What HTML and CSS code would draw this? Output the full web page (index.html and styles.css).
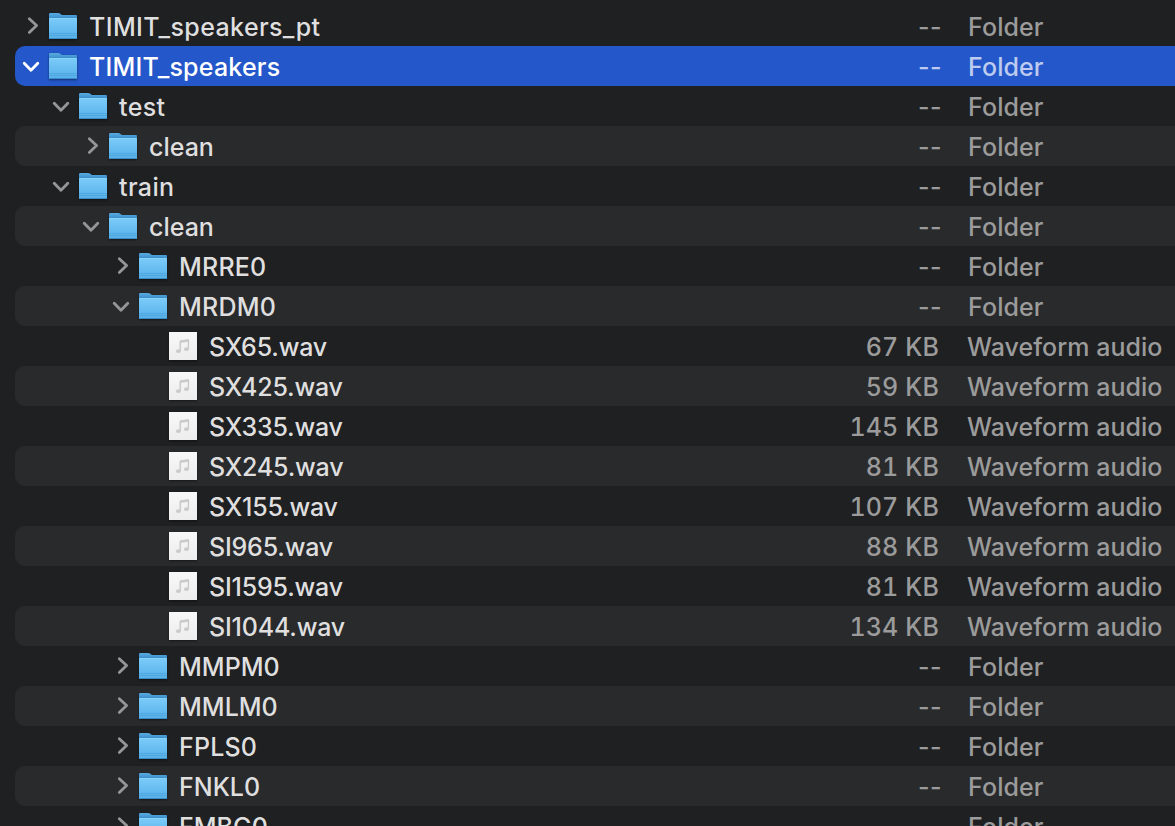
FILE: index.html
```html
<!DOCTYPE html>
<html lang="en">
<head>
<meta charset="utf-8">
<title>Files</title>
<link rel="stylesheet" href="styles.css">
</head>
<body>
<svg class="defs" aria-hidden="true">
  <defs>
    <linearGradient id="back" x1="0" y1="0" x2="0" y2="1"><stop offset="0" stop-color="#59acdf"/><stop offset=".22" stop-color="#398bcb"/><stop offset="1" stop-color="#398bcb"/></linearGradient>
    <linearGradient id="front" x1="0" y1="0" x2="0" y2="1"><stop offset="0" stop-color="#7acbf8"/><stop offset="1" stop-color="#57b0e9"/></linearGradient>
    <linearGradient id="paper" x1="0" y1="0" x2="0" y2="1"><stop offset="0" stop-color="#f8f8f8"/><stop offset="1" stop-color="#ededed"/></linearGradient>
    <symbol id="right" viewBox="0 0 34 40"><path class="stroke" d="M14.3 12.7 21.6 19.5 14.3 26.4"/></symbol>
    <symbol id="down" viewBox="0 0 34 40"><path class="stroke" d="M9.2 17.2 16 24.3 22.8 17.2"/></symbol>
    <symbol id="folder" viewBox="0 0 28 40">
      <path d="M0 8.2Q0 7 1.2 7H9.2Q10.4 7 11.2 7.7L12.6 8.7Q13.2 9 14.2 9H27Q28 9 28 10V32Q28 33 27 33H1Q0 33 0 32Z" fill="url(#back)"/>
      <path d="M0 13Q0 12 1 12H27Q28 12 28 13V32Q28 33 27 33H1Q0 33 0 32Z" fill="url(#front)"/>
      <path d="M.5 12.5H27.5" stroke="#91d6fa" stroke-width=".7"/>
      <path d="M0 27.5H28M0 29.5H28" stroke="#429bd5" stroke-width=".8" opacity=".7"/>
      <path d="M.5 32.5H27.5" stroke="#378bc6" stroke-width="1"/>
    </symbol>
    <symbol id="audio" viewBox="0 0 28 40">
      <path d="M0 6H28V34H0Z" fill="url(#paper)"/>
      <g fill="#cbcbcb"><path d="M11 14.2 20 13V15.8L11 17Z"/><ellipse cx="9.4" cy="25.2" rx="2.4" ry="1.9"/><ellipse cx="17.4" cy="23.2" rx="2.4" ry="1.9"/></g>
      <path d="M11.3 14.8V25M19.4 14V23" stroke="#cbcbcb" stroke-width="1.5"/>
    </symbol>
  </defs>
</svg>
<main class="list">
  <div class="row d0"><svg class="chevron"><use href="#right"/></svg><svg class="icon"><use href="#folder"/></svg><span class="name wide">TIMIT_speakers_pt</span><span class="size none">--</span><span class="kind">Folder</span></div>
  <div class="row d0 selected"><svg class="chevron"><use href="#down"/></svg><svg class="icon"><use href="#folder"/></svg><span class="name">TIMIT_speakers</span><span class="size none">--</span><span class="kind">Folder</span></div>
  <div class="row d1"><svg class="chevron"><use href="#down"/></svg><svg class="icon"><use href="#folder"/></svg><span class="name wide">test</span><span class="size none">--</span><span class="kind">Folder</span></div>
  <div class="row d2"><svg class="chevron"><use href="#right"/></svg><svg class="icon"><use href="#folder"/></svg><span class="name">clean</span><span class="size none">--</span><span class="kind">Folder</span></div>
  <div class="row d1"><svg class="chevron"><use href="#down"/></svg><svg class="icon"><use href="#folder"/></svg><span class="name wide">train</span><span class="size none">--</span><span class="kind">Folder</span></div>
  <div class="row d2"><svg class="chevron"><use href="#down"/></svg><svg class="icon"><use href="#folder"/></svg><span class="name">clean</span><span class="size none">--</span><span class="kind">Folder</span></div>
  <div class="row d3"><svg class="chevron"><use href="#right"/></svg><svg class="icon"><use href="#folder"/></svg><span class="name caps">MRRE0</span><span class="size none">--</span><span class="kind">Folder</span></div>
  <div class="row d3"><svg class="chevron"><use href="#down"/></svg><svg class="icon"><use href="#folder"/></svg><span class="name caps">MRDM0</span><span class="size none">--</span><span class="kind">Folder</span></div>
  <div class="row d4"><span class="chevron"></span><svg class="icon file"><use href="#audio"/></svg><span class="name wav">SX65.wav</span><span class="size">67 KB</span><span class="kind audio">Waveform audio</span></div>
  <div class="row d4"><span class="chevron"></span><svg class="icon file"><use href="#audio"/></svg><span class="name wav">SX425.wav</span><span class="size">59 KB</span><span class="kind audio">Waveform audio</span></div>
  <div class="row d4"><span class="chevron"></span><svg class="icon file"><use href="#audio"/></svg><span class="name wav">SX335.wav</span><span class="size">145 KB</span><span class="kind audio">Waveform audio</span></div>
  <div class="row d4"><span class="chevron"></span><svg class="icon file"><use href="#audio"/></svg><span class="name wav">SX245.wav</span><span class="size">81 KB</span><span class="kind audio">Waveform audio</span></div>
  <div class="row d4"><span class="chevron"></span><svg class="icon file"><use href="#audio"/></svg><span class="name wav">SX155.wav</span><span class="size">107 KB</span><span class="kind audio">Waveform audio</span></div>
  <div class="row d4"><span class="chevron"></span><svg class="icon file"><use href="#audio"/></svg><span class="name wav">SI965.wav</span><span class="size">88 KB</span><span class="kind audio">Waveform audio</span></div>
  <div class="row d4"><span class="chevron"></span><svg class="icon file"><use href="#audio"/></svg><span class="name wav">SI1595.wav</span><span class="size">81 KB</span><span class="kind audio">Waveform audio</span></div>
  <div class="row d4"><span class="chevron"></span><svg class="icon file"><use href="#audio"/></svg><span class="name wav">SI1044.wav</span><span class="size">134 KB</span><span class="kind audio">Waveform audio</span></div>
  <div class="row d3"><svg class="chevron"><use href="#right"/></svg><svg class="icon"><use href="#folder"/></svg><span class="name">MMPM0</span><span class="size none">--</span><span class="kind">Folder</span></div>
  <div class="row d3"><svg class="chevron"><use href="#right"/></svg><svg class="icon"><use href="#folder"/></svg><span class="name">MMLM0</span><span class="size none">--</span><span class="kind">Folder</span></div>
  <div class="row d3"><svg class="chevron"><use href="#right"/></svg><svg class="icon"><use href="#folder"/></svg><span class="name caps">FPLS0</span><span class="size none">--</span><span class="kind">Folder</span></div>
  <div class="row d3"><svg class="chevron"><use href="#right"/></svg><svg class="icon"><use href="#folder"/></svg><span class="name">FNKL0</span><span class="size none">--</span><span class="kind">Folder</span></div>
  <div class="row d3"><svg class="chevron"><use href="#right"/></svg><svg class="icon"><use href="#folder"/></svg><span class="name">FMBG0</span><span class="size none">--</span><span class="kind">Folder</span></div>
</main>
</body>
</html>
```
FILE: styles.css
```css
body { margin: 0; background: #1f2022; overflow: hidden; }
.defs { display: block; width: 0; height: 0; }
.list {
  box-sizing: border-box;
  height: 826px;
  padding: 6px 0 0 15px;
  overflow: hidden;
  font: 450 25px/40px Inter, "Liberation Sans", sans-serif;
  color: #9b9b9b;
}
.row {
  display: flex;
  box-sizing: border-box;
  height: 40px;
  border-radius: 10px 0 0 10px;
  white-space: pre;
}
.row:nth-child(even) { background: #292a2c; }
.row.selected { background: #2457c9; color: #bccbef; }
.d1 { padding-left: 30px; }
.d2 { padding-left: 60px; }
.d3 { padding-left: 90px; }
.d4 { padding-left: 120px; }
.chevron { flex: none; width: 34px; height: 40px; color: #969696; }
.selected .chevron { color: #fff; }
.stroke { fill: none; stroke: currentColor; stroke-width: 2.8; stroke-linecap: round; stroke-linejoin: round; }
.icon { flex: none; width: 28px; height: 40px; filter: drop-shadow(0 1px 1px rgb(0 0 0 / .45)); }
.name { flex: 1; padding: 1px 0 0 12px; color: #dfdfdf; }
.wide { letter-spacing: .38px; }
.caps { letter-spacing: .2px; }
.wav { letter-spacing: -.2px; }
.selected .name { color: #fff; letter-spacing: .2px; }
.size {
  flex: none;
  box-sizing: border-box;
  width: 110px;
  padding: 1px 1px 0 0;
  text-align: right;
  letter-spacing: .1px;
  font-variant-numeric: tabular-nums;
}
.size.none { width: 112px; padding-right: 0; margin-right: -2px; letter-spacing: .4px; font-variant-numeric: normal; }
.kind { flex: none; box-sizing: border-box; width: 235px; padding: 1px 0 0 28px; letter-spacing: .1px; }
.kind.audio { padding-left: 27px; letter-spacing: .03px; }
```
